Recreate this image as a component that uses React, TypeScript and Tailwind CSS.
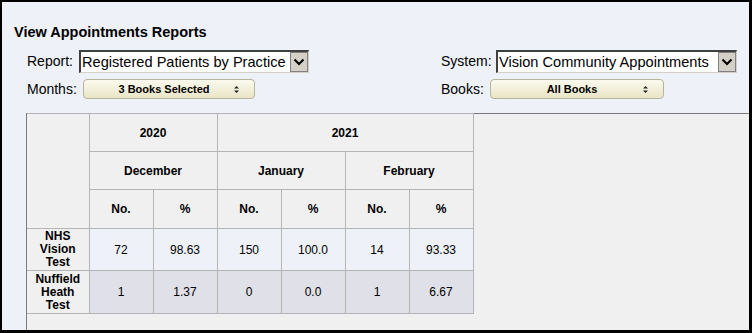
import React from "react";

const Select = ({ text, width }: { text: string; width: number }) => (
  <div
    className="flex h-[23px] items-stretch border-t-2 border-l-2 border-b border-r border-t-[#404040] border-l-[#404040] border-b-[#d4d0c8] border-r-[#d4d0c8] bg-white"
    style={{ width }}
  >
    <div className="flex-1 overflow-hidden whitespace-nowrap pl-px text-[14.6px] leading-[20px] text-black">{text}</div>
    <div className="flex w-[18px] items-center justify-center border border-[#808080] bg-[#d4d0c8]">
      <svg width="12" height="8" viewBox="0 0 12 8">
        <path d="M1.5 1.5 L6 6 L10.5 1.5" fill="none" stroke="#000" strokeWidth="2" />
      </svg>
    </div>
  </div>
);

const Btn = ({ text, width }: { text: string; width: number }) => (
  <div
    className="relative flex h-[20px] items-center justify-center rounded-[4px] border border-[#b8b49a] bg-gradient-to-b from-[#fbfaee] to-[#e9e5c6] text-[11px] font-bold text-black"
    style={{ width }}
  >
    <span className="-ml-[10px]">{text}</span>
    <svg className="absolute right-[15px] top-[6px]" width="5" height="7" viewBox="0 0 5 7">
      <path d="M0 2.5 L2.5 0 L5 2.5 Z M0 4.5 L2.5 7 L5 4.5 Z" fill="#222" />
    </svg>
  </div>
);

export default function App() {
  const cell = "border border-[#b4b4b4] text-center";
  return (
    <div
      className="box-border flex h-[333px] w-[752px] flex-col border-l-2 border-t-2 border-r-[3px] border-b-[3px] border-black bg-[#eef1f7]"
      style={{ fontFamily: '"Liberation Sans", Arial, sans-serif' }}
    >
      <div className="pl-[12px] pt-[22px] text-[14.5px] font-bold leading-[16px] text-black">View Appointments Reports</div>
      <div className="mt-[10px] flex pl-[25px]">
        <div className="flex w-[414px] flex-col gap-[6px]">
          <div className="flex h-[23px] items-center">
            <span className="w-[52px] text-[14px] text-black">Report:</span>
            <Select text="Registered Patients by Practice" width={230} />
          </div>
          <div className="flex h-[20px] items-center">
            <span className="w-[56px] text-[14px] text-black">Months:</span>
            <Btn text="3 Books Selected" width={172} />
          </div>
        </div>
        <div className="flex flex-col gap-[6px]">
          <div className="flex h-[23px] items-center">
            <span className="w-[55px] text-[14px] text-black">System:</span>
            <Select text="Vision Community Appointments" width={241} />
          </div>
          <div className="flex h-[20px] items-center">
            <span className="w-[49px] text-[14px] text-black">Books:</span>
            <Btn text="All Books" width={174} />
          </div>
        </div>
      </div>
      <div className="ml-[24px] mt-[14px] flex-1 border-l border-t border-[#7a7a7a] bg-[#f0f0f0]">
        <table className="-mt-px border-collapse text-[12px] text-black" style={{ tableLayout: "fixed", width: 446 }}>
          <colgroup>
            <col style={{ width: 62 }} />
            <col style={{ width: 64 }} />
            <col style={{ width: 64 }} />
            <col style={{ width: 64 }} />
            <col style={{ width: 64 }} />
            <col style={{ width: 64 }} />
            <col style={{ width: 64 }} />
          </colgroup>
          <thead className="font-bold">
            <tr className="h-[38px]">
              <th rowSpan={3} className={`${cell} border-l-0`}></th>
              <th colSpan={2} className={cell}>2020</th>
              <th colSpan={4} className={cell}>2021</th>
            </tr>
            <tr className="h-[38px]">
              <th colSpan={2} className={cell}>December</th>
              <th colSpan={2} className={cell}>January</th>
              <th colSpan={2} className={cell}>February</th>
            </tr>
            <tr className="h-[39px]">
              <th className={cell}>No.</th>
              <th className={cell}>%</th>
              <th className={cell}>No.</th>
              <th className={cell}>%</th>
              <th className={cell}>No.</th>
              <th className={cell}>%</th>
            </tr>
          </thead>
          <tbody>
            <tr className="h-[42px]">
              <th className={`${cell} border-l-0 font-bold leading-[13px]`}>NHS<br />Vision<br />Test</th>
              {["72", "98.63", "150", "100.0", "14", "93.33"].map((v, i) => (
                <td key={i} className={`${cell} bg-[#eef2f8]`}>{v}</td>
              ))}
            </tr>
            <tr className="h-[43px]">
              <th className={`${cell} border-l-0 font-bold leading-[13px]`}>Nuffield<br />Heath<br />Test</th>
              {["1", "1.37", "0", "0.0", "1", "6.67"].map((v, i) => (
                <td key={i} className={`${cell} bg-[#dfe0e8]`}>{v}</td>
              ))}
            </tr>
          </tbody>
        </table>
      </div>
    </div>
  );
}
